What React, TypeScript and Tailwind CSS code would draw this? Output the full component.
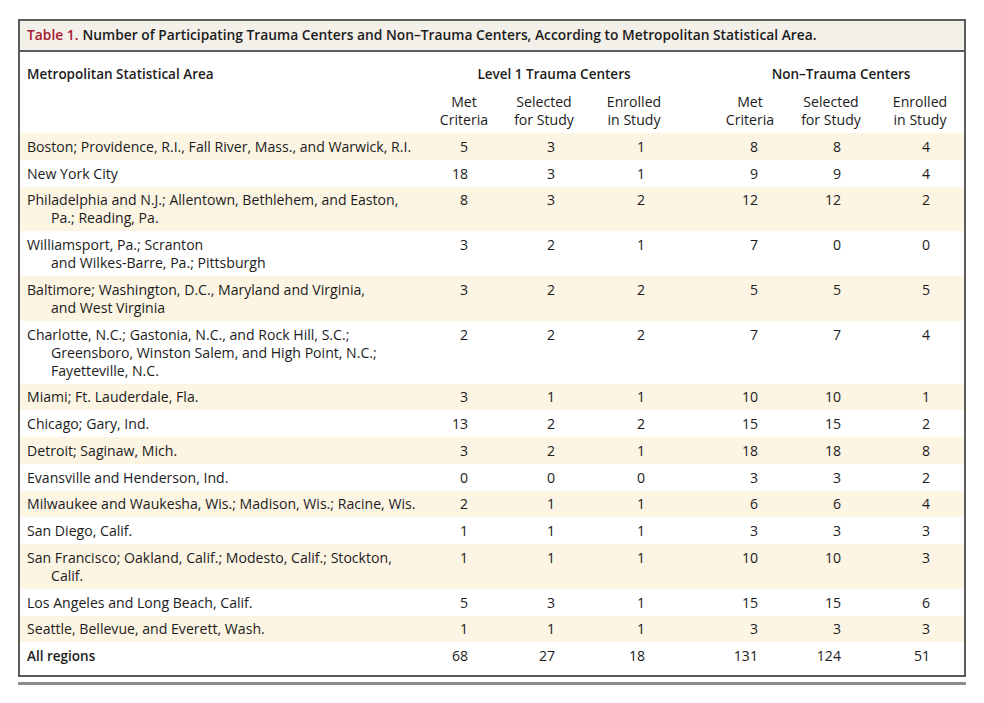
import React from "react"

type Row = {
  area: string[]
  l1: [string, string, string]
  nt: [string, string, string]
}

const rows: Row[] = [
  { area: ["Boston; Providence, R.I., Fall River, Mass., and Warwick, R.I."], l1: ["5", "3", "1"], nt: ["8", "8", "4"] },
  { area: ["New York City"], l1: ["18", "3", "1"], nt: ["9", "9", "4"] },
  { area: ["Philadelphia and N.J.; Allentown, Bethlehem, and Easton,", "Pa.; Reading, Pa."], l1: ["8", "3", "2"], nt: ["12", "12", "2"] },
  { area: ["Williamsport, Pa.; Scranton", "and Wilkes-Barre, Pa.; Pittsburgh"], l1: ["3", "2", "1"], nt: ["7", "0", "0"] },
  { area: ["Baltimore; Washington, D.C., Maryland and Virginia,", "and West Virginia"], l1: ["3", "2", "2"], nt: ["5", "5", "5"] },
  {
    area: ["Charlotte, N.C.; Gastonia, N.C., and Rock Hill, S.C.;", "Greensboro, Winston Salem, and High Point, N.C.;", "Fayetteville, N.C."],
    l1: ["2", "2", "2"],
    nt: ["7", "7", "4"],
  },
  { area: ["Miami; Ft. Lauderdale, Fla."], l1: ["3", "1", "1"], nt: ["10", "10", "1"] },
  { area: ["Chicago; Gary, Ind."], l1: ["13", "2", "2"], nt: ["15", "15", "2"] },
  { area: ["Detroit; Saginaw, Mich."], l1: ["3", "2", "1"], nt: ["18", "18", "8"] },
  { area: ["Evansville and Henderson, Ind."], l1: ["0", "0", "0"], nt: ["3", "3", "2"] },
  { area: ["Milwaukee and Waukesha, Wis.; Madison, Wis.; Racine, Wis."], l1: ["2", "1", "1"], nt: ["6", "6", "4"] },
  { area: ["San Diego, Calif."], l1: ["1", "1", "1"], nt: ["3", "3", "3"] },
  { area: ["San Francisco; Oakland, Calif.; Modesto, Calif.; Stockton,", "Calif."], l1: ["1", "1", "1"], nt: ["10", "10", "3"] },
  { area: ["Los Angeles and Long Beach, Calif."], l1: ["5", "3", "1"], nt: ["15", "15", "6"] },
  { area: ["Seattle, Bellevue, and Everett, Wash."], l1: ["1", "1", "1"], nt: ["3", "3", "3"] },
]

const cols = "grid grid-cols-[404px_80px_80px_100px_108px_78px_94px]"

function DataRow({ row, shaded }: { row: Row; shaded: boolean }) {
  return (
    <div className={`${cols} pt-[4.75px] pb-[4px] leading-[18px] ${shaded ? "bg-[#fdf5e4]" : "bg-white"}`}>
      <div className="pl-[7px]">
        {row.area.map((line, i) => (
          <div key={i} className={i > 0 ? "pl-[24px]" : ""}>
            {line}
          </div>
        ))}
      </div>
      <div className="text-right pr-[36px]">{row.l1[0]}</div>
      <div className="text-right pr-[29px]">{row.l1[1]}</div>
      <div className="text-right pr-[39px]">{row.l1[2]}</div>
      <div className="text-right pr-[34px]">{row.nt[0]}</div>
      <div className="text-right pr-[29px]">{row.nt[1]}</div>
      <div className="text-right pr-[34px]">{row.nt[2]}</div>
    </div>
  )
}

export default function App() {
  return (
    <div className="min-h-screen bg-white pt-[19px] text-[#1c1c1c]" style={{ fontFamily: "'Open Sans', Lato, sans-serif" }}>
      <div className="ml-[18px] w-[948px]">
        <div className="border-2 border-[#5c5c5c]">
          <div className="bg-[#f3efe9] border-b-2 border-[#5c5c5c] h-[31px] flex items-center pl-[7px] text-[13.8px] font-semibold">
            <span className="text-[#a6192e]">Table 1.</span>
            <span className="ml-[4px]">Number of Participating Trauma Centers and Non–Trauma Centers, According to Metropolitan Statistical Area.</span>
          </div>

          <div className="text-[14.1px]">
            <div className={`${cols} pt-[13px] pb-[10px] leading-[18px] font-semibold text-[13.5px]`}>
              <div className="pl-[7px]">Metropolitan Statistical Area</div>
              <div className="col-span-3 text-center">Level 1 Trauma Centers</div>
              <div className="col-span-3 text-center pl-[34px]">Non–Trauma Centers</div>
            </div>
            <div className={`${cols} pb-[4px] leading-[18px]`}>
              <div />
              <div className="text-center">Met<br />Criteria</div>
              <div className="text-center">Selected<br />for Study</div>
              <div className="text-center">Enrolled<br />in Study</div>
              <div className="text-center pl-[24px]">Met<br />Criteria</div>
              <div className="text-center">Selected<br />for Study</div>
              <div className="text-center pl-[6px]">Enrolled<br />in Study</div>
            </div>

            {rows.map((r, i) => (
              <DataRow key={i} row={r} shaded={i % 2 === 0} />
            ))}

            <div className={`${cols} pt-[4.75px] pb-[10px] leading-[18px]`}>
              <div className="pl-[7px] font-semibold text-[13.5px]">All regions</div>
              <div className="text-right pr-[36px]">68</div>
              <div className="text-right pr-[29px]">27</div>
              <div className="text-right pr-[39px]">18</div>
              <div className="text-right pr-[34px]">131</div>
              <div className="text-right pr-[29px]">124</div>
              <div className="text-right pr-[34px]">51</div>
            </div>
          </div>
        </div>
        <div className="mt-[5px] h-[3px] bg-[#8c8c8c]" />
      </div>
    </div>
  )
}
